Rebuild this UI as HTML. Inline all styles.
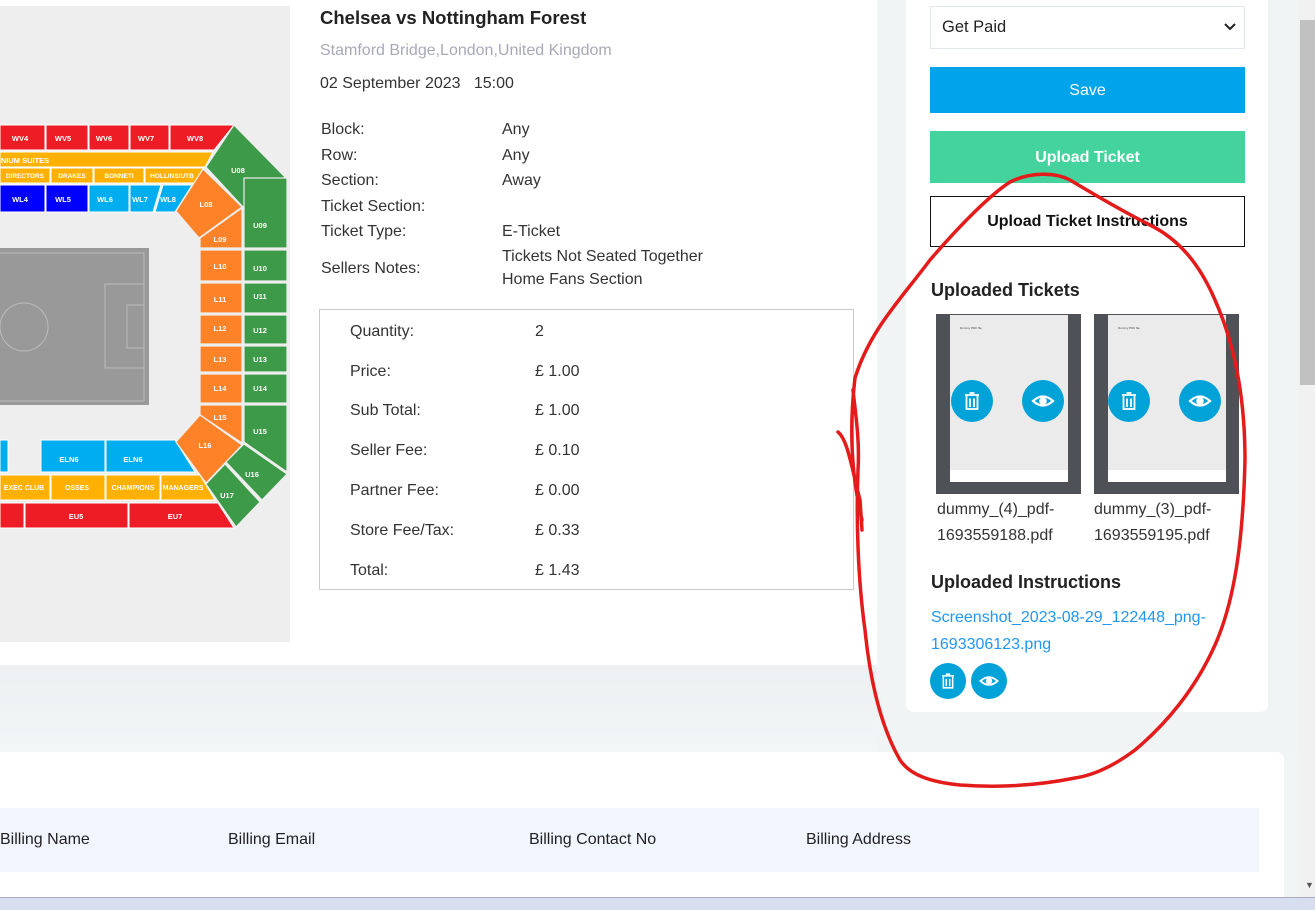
<!DOCTYPE html>
<html><head><meta charset="utf-8"><style>
*{margin:0;padding:0;box-sizing:border-box}
body{width:1315px;height:910px;overflow:hidden;background:#f2f5f6;font-family:"Liberation Sans",sans-serif;color:#222;position:relative}
.a{position:absolute;white-space:nowrap}
.t{font-size:16px;color:#333}
.btn{position:absolute;left:930px;width:315px;display:flex;align-items:center;justify-content:center;font-size:16px}
</style></head><body>
<div class="a" style="left:0;top:0;width:877px;height:665px;background:#fff"></div>
<div class="a" style="left:0;top:665px;width:877px;height:88px;background:linear-gradient(#ecf0f1,#f3f6f7)"></div>
<div class="a" style="left:878px;top:0;width:420px;height:752px;background:#f1f4f5"></div>
<div class="a" style="left:906px;top:0;width:362px;height:712px;background:#fff;border-radius:0 0 8px 8px"></div>
<div class="a" style="left:1298px;top:0;width:17px;height:897px;background:#f1f1f1"></div>
<div class="a" style="left:1300px;top:20px;width:15px;height:365px;background:#c1c1c1"></div>
<div class="a" style="left:1305px;top:880px;font-size:9px;color:#555">▼</div>
<div class="a" style="left:0;top:752px;width:1284px;height:145px;background:#fff;border-radius:0 8px 0 0"></div>
<div class="a" style="left:0;top:808px;width:1259px;height:64px;background:#f1f5fe"></div>
<div class="a t" style="left:0;top:831px;color:#222">Billing Name</div>
<div class="a t" style="left:228px;top:831px;color:#222">Billing Email</div>
<div class="a t" style="left:529px;top:831px;color:#222">Billing Contact No</div>
<div class="a t" style="left:806px;top:831px;color:#222">Billing Address</div>
<div class="a" style="left:0;top:897px;width:1315px;height:13px;background:#d6deef;border-top:1px solid #aab"></div>

<svg class="a" style="left:0;top:6px" width="290" height="636" viewBox="0 6 290 636">
<rect x="0" y="6" width="290" height="636" fill="#eeeeee"/>
<g fill="#ee1c25" stroke="#fff" stroke-width="1"><rect x="0" y="125" width="45" height="25"/><rect x="46" y="125" width="42" height="25"/><rect x="89" y="125" width="40" height="25"/><rect x="130" y="125" width="39" height="25"/><polygon points="170,125 234,125 214,150 170,150"/>
<rect x="0" y="503" width="24" height="25"/><rect x="25" y="503" width="103" height="25"/><polygon points="129,503 218,503 234,528 129,528"/></g>
<g fill="#ffb000" stroke="#fff" stroke-width="1"><polygon points="0,152 213,152 205,167 0,167"/><rect x="0" y="168" width="50" height="15"/><rect x="51" y="168" width="42" height="15"/><rect x="94" y="168" width="50" height="15"/><polygon points="145,168 203,168 196,183 145,183"/>
<rect x="0" y="475" width="50" height="25"/><rect x="51" y="475" width="54" height="25"/><rect x="106" y="475" width="54" height="25"/><polygon points="161,475 200,475 215,500 161,500"/></g>
<g fill="#0000ff" stroke="#fff"><rect x="0" y="185" width="45" height="27"/><rect x="46" y="185" width="42" height="27"/></g>
<g fill="#00aeef" stroke="#fff"><rect x="89" y="185" width="40" height="27"/><polygon points="130,185 161,185 153,212 130,212"/><polygon points="163,185 192,185 175,212 155,212"/>
<rect x="0" y="440" width="8" height="32"/><rect x="41" y="440" width="64" height="32"/><polygon points="106,440 175,440 195,472 106,472"/></g>
<rect x="0" y="248" width="149" height="157" fill="#999"/>
<g fill="none" stroke="#bbb" stroke-width="1"><rect x="-2" y="253" width="146" height="148"/><circle cx="24" cy="327" r="24"/><rect x="105" y="284" width="39" height="84"/><rect x="127" y="305" width="17" height="43"/></g>
<g fill="#3c9a48" stroke="#eee" stroke-width="1.2"><polygon points="234,125 285,177 243,207 206,167"/><rect x="244" y="178" width="43" height="70"/><rect x="244" y="250" width="43" height="31"/><rect x="244" y="283" width="43" height="30"/><rect x="244" y="315" width="43" height="29"/><rect x="244" y="346" width="43" height="26"/><rect x="244" y="374" width="43" height="29"/><polygon points="244,405 287,405 287,472 244,442"/><polygon points="226,462 244,444 287,474 262,500"/><polygon points="206,484 225,464 260,502 236,527"/></g>
<g fill="#fe8228" stroke="#eee" stroke-width="1.2"><polygon points="203,169 242,207 199,238 176,211"/><polygon points="200,238 242,208 242,248 200,248"/><rect x="200" y="250" width="42" height="31"/><rect x="200" y="283" width="42" height="30"/><rect x="200" y="315" width="42" height="29"/><rect x="200" y="346" width="42" height="26"/><rect x="200" y="374" width="42" height="29"/><polygon points="200,405 242,405 242,443 200,415"/><polygon points="200,415 242,445 206,483 176,442"/></g>
<g fill="#fff" font-size="7.5" font-weight="bold" font-family="Liberation Sans" text-anchor="middle">
<text x="20" y="141">WV4</text><text x="63" y="141">WV5</text><text x="104" y="141">WV6</text><text x="146" y="141">WV7</text><text x="195" y="141">WV8</text>
<text x="25" y="163">NIUM SUITES</text><text x="25" y="178" font-size="6.5">DIRECTORS</text><text x="72" y="178" font-size="6.5">DRAKES</text><text x="119" y="178" font-size="6.5">BONNETI</text><text x="172" y="178" font-size="6.5">HOLLINS/UTB</text>
<text x="20" y="202">WL4</text><text x="63" y="202">WL5</text><text x="105" y="202">WL6</text><text x="140" y="202">WL7</text><text x="168" y="202">WL8</text>
<text x="238" y="173">U08</text><text x="206" y="207">L08</text><text x="260" y="228">U09</text><text x="220" y="242">L09</text>
<text x="220" y="269">L10</text><text x="260" y="271">U10</text><text x="220" y="302">L11</text><text x="260" y="299">U11</text><text x="220" y="331">L12</text><text x="260" y="333">U12</text><text x="220" y="362">L13</text><text x="260" y="362">U13</text><text x="220" y="391">L14</text><text x="260" y="391">U14</text><text x="220" y="420">L15</text><text x="260" y="434">U15</text><text x="205" y="448">L16</text><text x="252" y="477">U16</text><text x="227" y="498">U17</text>
<text x="69" y="462">ELN6</text><text x="133" y="462">ELN6</text>
<text x="24" y="490" font-size="7">EXEC CLUB</text><text x="77" y="490" font-size="7">OSSES</text><text x="133" y="490" font-size="7">CHAMPIONS</text><text x="183" y="490" font-size="7">MANAGERS</text>
<text x="76" y="519">EU5</text><text x="175" y="519">EU7</text></g>
</svg>

<div class="a" style="left:320px;top:7px;font-size:18.5px;font-weight:bold;color:#222">Chelsea vs Nottingham Forest</div>
<div class="a" style="left:320px;top:42px;font-size:16px;color:#a8a8b8">Stamford Bridge,London,United Kingdom</div>
<div class="a" style="left:320px;top:75px;font-size:16px;color:#333">02 September 2023 &nbsp; 15:00</div>
<div class="a t" style="left:321px;top:121px">Block:</div><div class="a t" style="left:502px;top:121px">Any</div>
<div class="a t" style="left:321px;top:147px">Row:</div><div class="a t" style="left:502px;top:147px">Any</div>
<div class="a t" style="left:321px;top:172px">Section:</div><div class="a t" style="left:502px;top:172px">Away</div>
<div class="a t" style="left:321px;top:198px">Ticket Section:</div>
<div class="a t" style="left:321px;top:223px">Ticket Type:</div><div class="a t" style="left:502px;top:223px">E-Ticket</div>
<div class="a t" style="left:321px;top:260px">Sellers Notes:</div><div class="a t" style="left:502px;top:248px">Tickets Not Seated Together</div><div class="a t" style="left:502px;top:271px">Home Fans Section</div>
<div class="a" style="left:319px;top:309px;width:535px;height:281px;border:1px solid #ccc"></div>
<div class="a t" style="left:350px;top:323px">Quantity:</div><div class="a t" style="left:535px;top:323px">2</div>
<div class="a t" style="left:350px;top:363px">Price:</div><div class="a t" style="left:535px;top:363px">£ 1.00</div>
<div class="a t" style="left:350px;top:402px">Sub Total:</div><div class="a t" style="left:535px;top:402px">£ 1.00</div>
<div class="a t" style="left:350px;top:442px">Seller Fee:</div><div class="a t" style="left:535px;top:442px">£ 0.10</div>
<div class="a t" style="left:350px;top:482px">Partner Fee:</div><div class="a t" style="left:535px;top:482px">£ 0.00</div>
<div class="a t" style="left:350px;top:522px">Store Fee/Tax:</div><div class="a t" style="left:535px;top:522px">£ 0.33</div>
<div class="a t" style="left:350px;top:562px">Total:</div><div class="a t" style="left:535px;top:562px">£ 1.43</div>

<div class="a" style="left:930px;top:6px;width:315px;height:43px;border:1px solid #e2e6ee;background:#fff"></div>
<div class="a" style="left:942px;top:18px;font-size:16.5px;color:#222">Get Paid</div>
<svg class="a" style="left:1224px;top:23px" width="12" height="8"><path d="M1 1 L6 6 L11 1" stroke="#222" stroke-width="2" fill="none"/></svg>
<div class="btn" style="top:67px;height:46px;background:#00a4ea;color:#fff;padding-top:2px">Save</div>
<div class="btn" style="top:131px;height:52px;background:#44d39d;color:#fff;font-weight:bold;padding-top:2px">Upload Ticket</div>
<div class="btn" style="top:196px;height:51px;border:1.5px solid #111;color:#111;font-weight:bold">Upload Ticket Instructions</div>
<div class="a" style="left:931px;top:280px;font-size:18px;font-weight:bold;color:#222">Uploaded Tickets</div>

<div class="a" style="left:936px;top:314px;width:145px;height:180px;background:#4e5256"></div>
<div class="a" style="left:950px;top:315px;width:118px;height:167px;background:#fff"></div>
<div class="a" style="left:950px;top:315px;width:118px;height:155px;background:#ebebeb"></div>
<div class="a" style="left:960px;top:326px;font-size:3px;color:#444">Dummy PDF file</div>
<div class="a" style="left:1094px;top:314px;width:145px;height:180px;background:#4e5256"></div>
<div class="a" style="left:1108px;top:315px;width:118px;height:167px;background:#fff"></div>
<div class="a" style="left:1108px;top:315px;width:118px;height:155px;background:#ebebeb"></div>
<div class="a" style="left:1118px;top:326px;font-size:3px;color:#444">Dummy PDF file</div>

<svg width="0" height="0" style="position:absolute"><defs>
<g id="tr"><path d="M-7 -6 H7 M-2.5 -8 H2.5 M-5.5 -5 V8 H5.5 V-5 M-2 -2.5 V6 M2 -2.5 V6" stroke="#fff" stroke-width="1.8" fill="none"/></g>
<g id="ey"><path d="M-10 0 Q0 -9 10 0 Q0 9 -10 0Z" stroke="#fff" stroke-width="2.2" fill="none"/><circle r="3.8" fill="#fff"/></g></defs></svg>
<svg class="a" style="left:951px;top:380px" width="42" height="42"><circle cx="21" cy="21" r="21" fill="#00a2d8"/><use href="#tr" x="21" y="21"/></svg>
<svg class="a" style="left:1022px;top:380px" width="42" height="42"><circle cx="21" cy="21" r="21" fill="#00a2d8"/><use href="#ey" x="21" y="21"/></svg>
<svg class="a" style="left:1108px;top:380px" width="42" height="42"><circle cx="21" cy="21" r="21" fill="#00a2d8"/><use href="#tr" x="21" y="21"/></svg>
<svg class="a" style="left:1179px;top:380px" width="42" height="42"><circle cx="21" cy="21" r="21" fill="#00a2d8"/><use href="#ey" x="21" y="21"/></svg>

<div class="a t" style="left:937px;top:497px;line-height:26px">dummy_(4)_pdf-<br>1693559188.pdf</div>
<div class="a t" style="left:1094px;top:497px;line-height:26px">dummy_(3)_pdf-<br>1693559195.pdf</div>
<div class="a" style="left:931px;top:572px;font-size:18px;font-weight:bold;color:#222">Uploaded Instructions</div>
<div class="a" style="left:931px;top:604px;font-size:16px;color:#2196f3;line-height:27px">Screenshot_2023-08-29_122448_png-<br>1693306123.png</div>
<svg class="a" style="left:930px;top:663px" width="36" height="36"><circle cx="18" cy="18" r="18" fill="#00a2d8"/><use href="#tr" transform="translate(18 18) scale(.85)"/></svg>
<svg class="a" style="left:971px;top:663px" width="36" height="36"><circle cx="18" cy="18" r="18" fill="#00a2d8"/><use href="#ey" transform="translate(18 18) scale(.85)"/></svg>

<svg class="a" style="left:0;top:0" width="1315" height="910">
<path d="M838 432 C848 440 852 470 860 500 L862 530 M862 520 C850 470 850 420 855 378 C870 330 900 300 930 260 C960 225 990 195 1010 182 C1030 172 1055 172 1070 180 C1090 192 1120 210 1150 225 C1180 240 1200 265 1215 300 C1235 345 1245 400 1245 460 C1243 540 1235 600 1215 645 C1195 690 1165 725 1135 750 C1115 765 1095 775 1075 778 C1040 785 1000 788 960 785 C930 782 910 775 900 760 C880 725 870 680 865 630 C858 580 856 520 858 470 C860 440 855 410 853 390" stroke="#e41b1b" stroke-width="3.5" fill="none" stroke-linecap="round"/>
</svg>
</body></html>
